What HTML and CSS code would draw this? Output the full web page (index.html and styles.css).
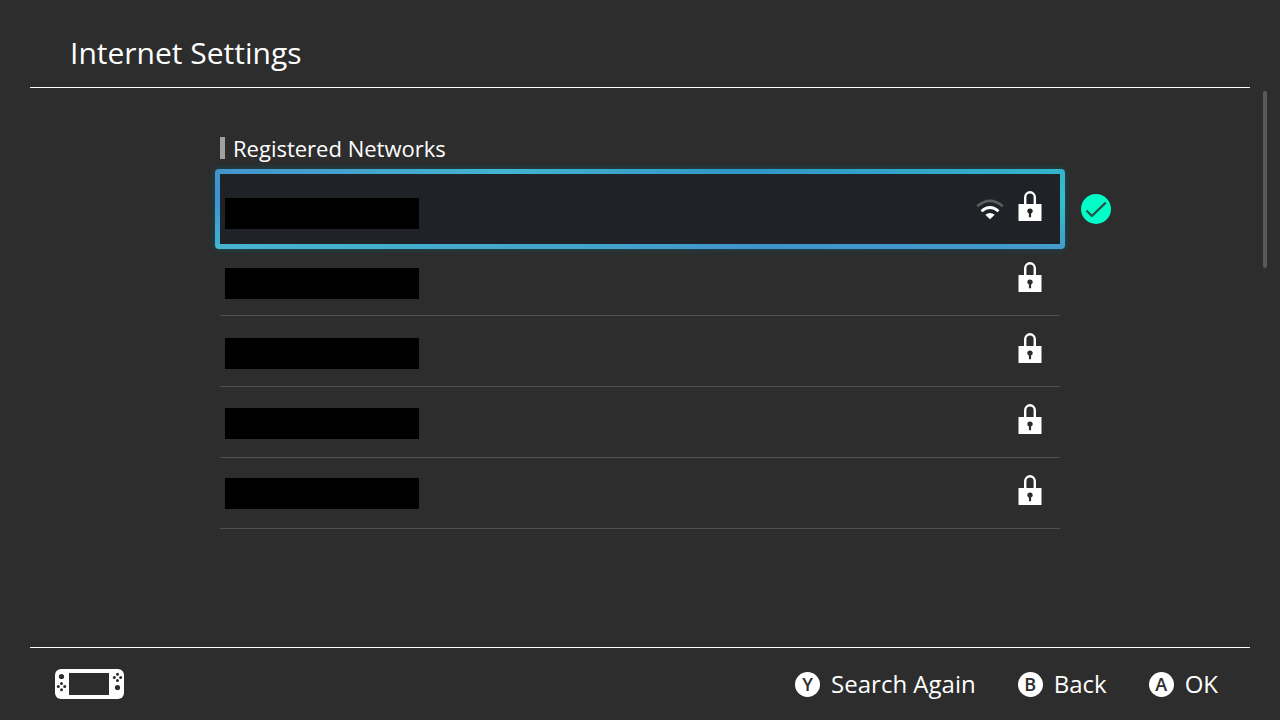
FILE: index.html
```html
<!DOCTYPE html>
<html lang="en">
<head>
<meta charset="utf-8">
<meta name="viewport" content="width=device-width, initial-scale=1">
<title>Internet Settings</title>
<link rel="stylesheet" href="styles.css">
</head>
<body>
<svg class="defs" aria-hidden="true">
  <symbol id="lock" viewBox="0 0 24 30">
    <path d="M7.200 14V6.200a4.800 4.900 0 0 1 9.600 0V14" fill="none" stroke="#fff" stroke-width="2.400"/>
    <path fill="#fff" fill-rule="evenodd" d="M.5 13h23v17H.5zM12 17.400a2.700 2.700 0 0 0-1.100 5.200V26.300h2.200v-3.700a2.700 2.700 0 0 0-1.100-5.200z"/>
  </symbol>
</svg>
<div class="screen">
  <header class="header"><h1 class="title">Internet Settings</h1></header>
  <main class="content">
    <section class="networks">
      <h2 class="section-title">Registered Networks</h2>
      <ul class="list">
        <li class="item">
          <button class="row row-selected" aria-label="Network 1, connected">
            <svg class="wifi" viewBox="0 0 28 21" aria-hidden="true">
              <path d="M1.200 7.300Q14-3.600 26.800 7.300" fill="none" stroke="#5c5e60" stroke-width="2.600"/>
              <path d="M5.500 12.200Q14 4.800 22.500 12.200" fill="none" stroke="#fff" stroke-width="2.800"/>
              <path d="M9.300 15.800Q14 12 18.700 15.800L14 20.300z" fill="#fff"/>
            </svg>
            <svg class="lock" aria-hidden="true"><use href="#lock"/></svg>
          </button>
          <svg class="check" viewBox="0 0 30 30" aria-hidden="true">
            <circle cx="15" cy="15" r="15" fill="#00ffc8"/>
            <path d="M5.500 16.500l5.300 5.500L24.800 8.600" fill="none" stroke="#2d4d46" stroke-width="2.200"/>
          </svg>
        </li>
        <li class="item"><button class="row" aria-label="Network 2"><svg class="lock" aria-hidden="true"><use href="#lock"/></svg></button></li>
        <li class="item"><button class="row" aria-label="Network 3"><svg class="lock" aria-hidden="true"><use href="#lock"/></svg></button></li>
        <li class="item"><button class="row" aria-label="Network 4"><svg class="lock" aria-hidden="true"><use href="#lock"/></svg></button></li>
        <li class="item"><button class="row" aria-label="Network 5"><svg class="lock" aria-hidden="true"><use href="#lock"/></svg></button></li>
      </ul>
      <div class="masks" aria-hidden="true">
        <span class="mask"></span><span class="mask"></span><span class="mask"></span><span class="mask"></span><span class="mask"></span>
      </div>
    </section>
    <div class="scrollbar"></div>
  </main>
  <footer class="footer">
    <svg class="console" viewBox="0 0 70 30" aria-hidden="true">
      <rect width="69" height="30" rx="6" fill="#fff"/>
      <g fill="#2d2d2d">
        <rect x="14" y="4" width="40" height="22"/>
        <circle cx="6.500" cy="7.500" r="2.600"/>
        <circle cx="6.500" cy="14.400" r="1.500"/><circle cx="6.500" cy="20.800" r="1.500"/><circle cx="3.300" cy="17.600" r="1.500"/><circle cx="9.700" cy="17.600" r="1.500"/>
        <circle cx="62.500" cy="5.200" r="1.500"/><circle cx="62.500" cy="11.600" r="1.500"/><circle cx="59.300" cy="8.400" r="1.500"/><circle cx="65.700" cy="8.400" r="1.500"/>
        <circle cx="62.500" cy="18.500" r="2.600"/>
      </g>
    </svg>
    <nav class="actions">
      <button class="action"><span class="key">Y</span>Search Again</button>
      <button class="action"><span class="key">B</span>Back</button>
      <button class="action"><span class="key">A</span>OK</button>
    </nav>
  </footer>
</div>
</body>
</html>
```

FILE: styles.css
```css
* { box-sizing: border-box; }
body {
  margin: 0;
  background: #2d2d2d;
  color: #fff;
  font-family: "Open Sans", "Noto Sans", sans-serif;
}
button {
  border: 0;
  background: none;
  color: inherit;
  font: inherit;
  cursor: pointer;
}
.defs { position: absolute; width: 0; height: 0; }
.screen {
  display: flex;
  flex-direction: column;
  min-height: 100vh;
  padding: 0 30px;
}
.header {
  padding: 33px 40px 14px;
  border-bottom: 1px solid #fff;
}
.title {
  margin: 0;
  font-size: 30px;
  line-height: 40px;
  font-weight: 400;
}
.content {
  position: relative;
  flex: 1;
  padding: 46px 190px 0;
}
.networks { position: relative; }
.section-title {
  display: flex;
  align-items: center;
  gap: 8px;
  margin: 0;
  font-size: 22px;
  line-height: 28px;
  font-weight: 400;
}
.section-title::before {
  content: "";
  width: 5px;
  height: 22px;
  background: #a0a0a0;
}
.list {
  margin: 0;
  padding: 12px 0 0;
  list-style: none;
}
.item { position: relative; }
.row {
  display: flex;
  align-items: flex-start;
  justify-content: flex-end;
  gap: 14px;
  width: 100%;
  height: 71px;
  padding: 17px 18px 0;
  border-bottom: 1px solid #505050;
}
.row-selected { border: 0; }
.row-selected::before {
  content: "";
  position: absolute;
  inset: -5px -5px -4px;
  border-radius: 4px;
  background:
    linear-gradient(90deg, #4494cc, #42b4d0 34%, #3096c6 62%, #34b4cc) top / 100% 5px no-repeat,
    linear-gradient(90deg, #46b5cf, #42a4cc 45%, #4094cc 64%, #429ccc) bottom / 100% 5px no-repeat,
    linear-gradient(#4494cc, #3c94d0 40%, #42b4cf) left / 5px 100% no-repeat,
    linear-gradient(#34b4cc, #34c0cc 40%, #429ccc) right / 5px 100% no-repeat,
    #1f2327;
  box-shadow: 0 0 6px #14505a;
}
.lock { position: relative; width: 24px; height: 30px; }
.wifi { position: relative; width: 28px; height: 21px; margin-top: 8px; }
.check {
  position: absolute;
  top: 20px;
  right: -51px;
  width: 30px;
  height: 30px;
}
.masks {
  position: absolute;
  top: 64px;
  left: 5px;
  display: flex;
  flex-direction: column;
  gap: 39px;
}
.mask { width: 194px; height: 31px; background: #000; }
.scrollbar {
  position: absolute;
  top: 3px;
  right: -17px;
  width: 4px;
  height: 177px;
  border-radius: 2px;
  background: #595959;
}
.footer {
  display: flex;
  align-items: center;
  justify-content: space-between;
  height: 73px;
  padding: 0 32px 0 25px;
  border-top: 1px solid #fff;
}
.console { width: 70px; height: 30px; }
.actions { display: flex; gap: 42px; }
.action {
  display: flex;
  align-items: center;
  gap: 11px;
  padding: 0;
  font-size: 24px;
  line-height: 34px;
  font-weight: 400;
}
.key {
  width: 25px;
  height: 25px;
  border-radius: 50%;
  background: #fff;
  color: #2d2d2d;
  font-size: 18px;
  line-height: 25px;
  font-weight: 600;
  text-align: center;
}
```
